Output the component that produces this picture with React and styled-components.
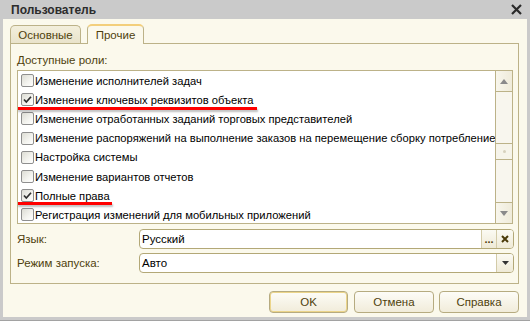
import React from 'react';
import styled, { createGlobalStyle } from 'styled-components';

const Global = createGlobalStyle`
  html, body { margin: 0; padding: 0; background: #cbcbcb; }
  body { font-family: "Liberation Sans", Arial, sans-serif; }
  #root { width: 530px; height: 321px; }
`;

const olive = '#4f3f0c';
const tan = '#bcb288';

const Window = styled.div`
  width: 530px;
  height: 321px;
  box-sizing: border-box;
  display: flex;
  flex-direction: column;
  background: #cacaca;
  padding: 0 3px 3px 3px;
  border-bottom: 1px solid #a2a2a2;
`;

const TitleBar = styled.div`
  height: 19px;
  flex: none;
  display: flex;
  align-items: center;
  justify-content: space-between;
  padding: 0 5px 0 5px;
  font-weight: bold;
  font-size: 12px;
  color: #2c2c2c;
`;

const TitleText = styled.span`
  padding-left: 3px;
`;

const Content = styled.div`
  flex: 1;
  background: #fbf9ec;
  display: flex;
  flex-direction: column;
  padding: 5px 8px 0 7px;
  min-height: 0;
`;

const TabsRow = styled.div`
  display: flex;
  align-items: flex-end;
  gap: 6px;
  height: 20px;
  margin-bottom: -1px;
  position: relative;
  z-index: 1;
`;

const Tab = styled.div`
  box-sizing: border-box;
  width: ${p => p.$w}px;
  height: ${p => (p.$active ? 20 : 18)}px;
  margin-bottom: ${p => (p.$active ? 0 : 1)}px;
  display: flex;
  align-items: center;
  justify-content: center;
  font-size: 11.5px;
  color: ${olive};
  border: 1px solid ${tan};
  border-bottom: none;
  border-radius: 5px 5px 0 0;
  background: ${p => (p.$active ? '#fbf9ec' : 'linear-gradient(#f3efdc, #e9e3cb)')};
  border-top: ${p => (p.$active ? '2px solid #f3cf7c' : `1px solid ${tan}`)};
  padding-top: ${p => (p.$active ? 0 : 1)}px;
`;

const Panel = styled.div`
  box-sizing: border-box;
  height: 241px;
  border: 1px solid ${tan};
  display: flex;
  flex-direction: column;
  padding: 8px 5px 0 6px;
`;

const Label = styled.div`
  font-size: 11.5px;
  color: ${olive};
  height: 16px;
  line-height: 16px;
  margin-bottom: ${p => (p.$flush ? 0 : 2)}px;
`;

const List = styled.div`
  box-sizing: border-box;
  height: 154px;
  border: 1px solid ${tan};
  background: #fff;
  display: flex;
  position: relative;
`;

const Rows = styled.div`
  flex: 1;
  overflow: hidden;
  position: relative;
`;

const Row = styled.div`
  height: 19.2px;
  display: flex;
  align-items: center;
  gap: 1px;
  padding-left: 3px;
  font-size: 11.2px;
  color: #000;
  white-space: nowrap;
`;

const Box = styled.span`
  box-sizing: border-box;
  flex: none;
  width: 13px;
  height: 13px;
  border: 1px solid #8e8e8e;
  border-radius: 2px;
  background: linear-gradient(135deg, #dcdcd4 0%, #f4f4f0 60%, #ffffff 100%);
  display: flex;
  align-items: center;
  justify-content: center;
`;

const Underline = styled.div`
  position: absolute;
  left: -1px;
  width: ${p => p.$w}px;
  top: ${p => p.$top}px;
  height: 3px;
  background: #ff0000;
  box-shadow: 1px 2px 2px rgba(0, 0, 0, 0.25);
`;

const Scrollbar = styled.div`
  flex: none;
  width: 17px;
  box-sizing: border-box;
  border-left: 1px solid ${tan};
  display: flex;
  flex-direction: column;
  background: #f8f6ee;
`;

const ScrollBtn = styled.div`
  height: 21px;
  flex: none;
  box-sizing: border-box;
  display: flex;
  align-items: center;
  justify-content: center;
  background: linear-gradient(90deg, #f8f6ec, #efebda);
  border-top: ${p => (p.$down ? `1px solid ${tan}` : 'none')};
  border-bottom: ${p => (p.$down ? 'none' : `1px solid ${tan}`)};
`;

const Track = styled.div`
  flex: ${p => p.$f};
`;

const Thumb = styled.div`
  height: 17px;
  flex: none;
  box-sizing: border-box;
  border-top: 1px solid ${tan};
  border-bottom: 1px solid ${tan};
  background: #f6f4ea;
  display: flex;
  align-items: center;
  justify-content: center;
  &::after {
    content: '';
    width: 3px;
    height: 3px;
    border-radius: 50%;
    background: #d6d1bd;
  }
`;

const FieldRow = styled.div`
  display: grid;
  grid-template-columns: 122px 1fr;
  align-items: center;
  margin-top: ${p => p.$mt}px;
  margin-right: -1px;
`;

const Field = styled.div`
  box-sizing: border-box;
  height: 20px;
  border: 1px solid #b3a877;
  border-radius: 4px;
  background: #fff;
  display: flex;
  align-items: stretch;
  overflow: hidden;
`;

const FieldText = styled.div`
  flex: 1;
  display: flex;
  align-items: center;
  padding-left: 2px;
  font-size: 11.5px;
  color: #000;
`;

const FieldBtn = styled.div`
  width: ${p => p.$w}px;
  flex: none;
  display: flex;
  align-items: center;
  justify-content: center;
  background: linear-gradient(#fbfaf3, #efead6);
  border-left: 1px solid #d3cba8;
  color: ${olive};
  font-size: 11px;
  font-weight: bold;
`;

const ButtonsRow = styled.div`
  display: flex;
  justify-content: flex-end;
  margin-top: 7px;
  gap: 5px;
`;

const Button = styled.div`
  box-sizing: border-box;
  width: ${p => p.$w}px;
  height: 22px;
  border: 1px solid #b6ab80;
  border-radius: 4px;
  background: linear-gradient(#fdfcf7, #f1ecda);
  box-shadow: ${p => (p.$default ? 'inset 0 0 0 1px #ecd58a' : 'none')};
  display: flex;
  align-items: center;
  justify-content: center;
  font-size: 11.5px;
  color: ${olive};
  margin-right: ${p => p.$mr || 0}px;
`;

const Check = () => (
  <svg width="9" height="9" viewBox="0 0 9 9">
    <polyline points="1,4.5 3.3,7 8,1.8" fill="none" stroke="#2f2f2f" strokeWidth="1.7" />
  </svg>
);

const items = [
  ['Изменение исполнителей задач', false],
  ['Изменение ключевых реквизитов объекта', true],
  ['Изменение отработанных заданий торговых представителей', false],
  ['Изменение распоряжений на выполнение заказов на перемещение сборку потребление', false],
  ['Настройка системы', false],
  ['Изменение вариантов отчетов', false],
  ['Полные права', true],
  ['Регистрация изменений для мобильных приложений', false],
];

export default function App() {
  return (
    <>
      <Global />
      <Window>
        <TitleBar>
          <TitleText>Пользователь</TitleText>
          <svg width="11" height="11" viewBox="0 0 11 11">
            <path d="M1 1 L10 10 M10 1 L1 10" stroke="#2a2a2a" strokeWidth="2.2" />
          </svg>
        </TitleBar>
        <Content>
          <TabsRow>
            <Tab $w={71}>Основные</Tab>
            <Tab $w={57} $active>Прочие</Tab>
          </TabsRow>
          <Panel>
            <Label>Доступные роли:</Label>
            <List>
              <Rows>
                {items.map(([t, c]) => (
                  <Row key={t}>
                    <Box>{c && <Check />}</Box>
                    {t}
                  </Row>
                ))}
                <Underline $w={240} $top={36} />
                <Underline $w={95} $top={131} />
              </Rows>
              <Scrollbar>
                <ScrollBtn>
                  <svg width="8" height="5" viewBox="0 0 8 5"><polygon points="0,5 8,5 4,0" fill="#8a8a8a" /></svg>
                </ScrollBtn>
                <Track $f={52} />
                <Thumb />
                <Track $f={42} />
                <ScrollBtn $down>
                  <svg width="8" height="5" viewBox="0 0 8 5"><polygon points="0,0 8,0 4,5" fill="#8a8a8a" /></svg>
                </ScrollBtn>
              </Scrollbar>
            </List>
            <FieldRow $mt={5}>
              <Label $flush>Язык:</Label>
              <Field>
                <FieldText>Русский</FieldText>
                <FieldBtn $w={14}>...</FieldBtn>
                <FieldBtn $w={16}>
                  <svg width="8" height="8" viewBox="0 0 8 8">
                    <path d="M1 1 L7 7 M7 1 L1 7" stroke="#4a3a08" strokeWidth="2" />
                  </svg>
                </FieldBtn>
              </Field>
            </FieldRow>
            <FieldRow $mt={4}>
              <Label $flush>Режим запуска:</Label>
              <Field>
                <FieldText>Авто</FieldText>
                <FieldBtn $w={16}>
                  <svg width="7" height="4" viewBox="0 0 7 4"><polygon points="0,0 7,0 3.5,4" fill="#333" /></svg>
                </FieldBtn>
              </Field>
            </FieldRow>
          </Panel>
          <ButtonsRow>
            <Button $w={79} $default $mr={1}>OK</Button>
            <Button $w={80}>Отмена</Button>
            <Button $w={80}>Справка</Button>
          </ButtonsRow>
        </Content>
      </Window>
    </>
  );
}
